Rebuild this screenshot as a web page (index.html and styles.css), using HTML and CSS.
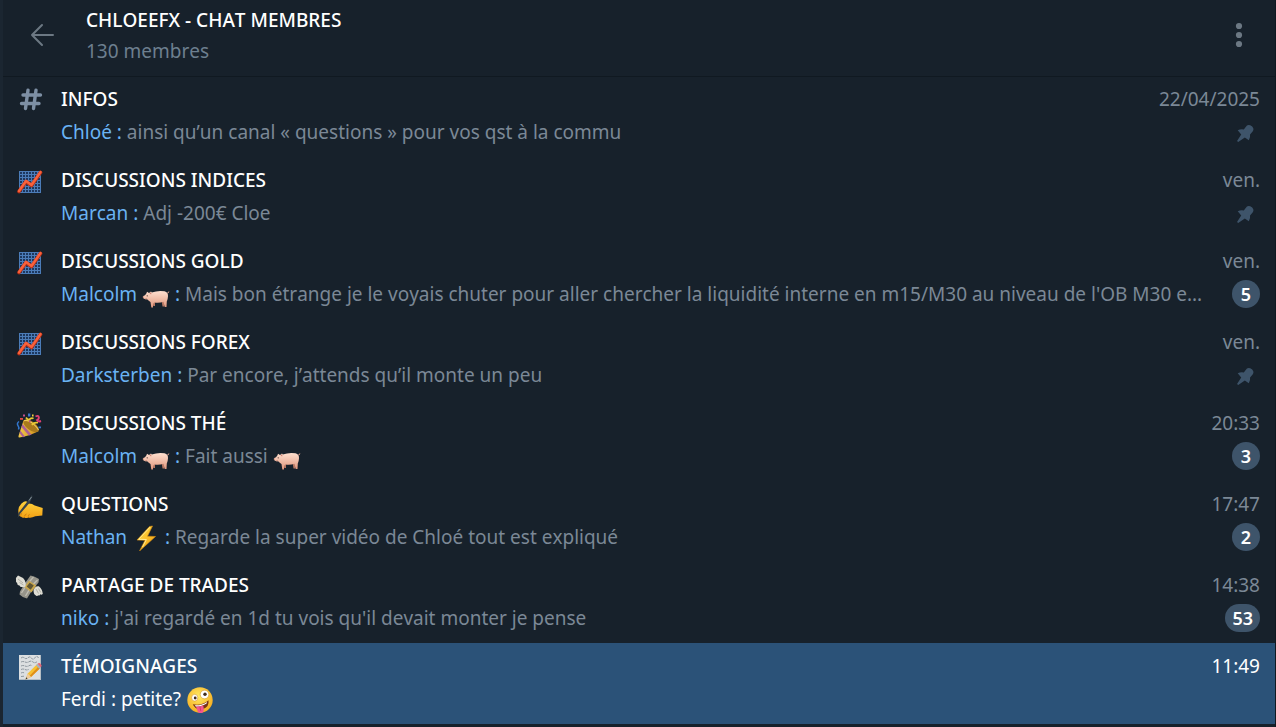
FILE: index.html
```html
<!DOCTYPE html>
<html lang="fr">
<head>
<meta charset="utf-8">
<title>CHLOEEFX - CHAT MEMBRES</title>
<meta name="viewport" content="width=device-width, initial-scale=1">
<link rel="stylesheet" href="styles.css">
</head>
<body>
<svg class="sprite" width="0" height="0" aria-hidden="true">
  <defs>
    <linearGradient id="g-pig" x1="0" y1="0" x2="0" y2="1"><stop offset="0" stop-color="#ffe0d0"/><stop offset="1" stop-color="#e0967c"/></linearGradient>
    <linearGradient id="g-bolt" x1="0" y1="0" x2="1" y2="1"><stop offset="0" stop-color="#ffe24a"/><stop offset="1" stop-color="#f59b0b"/></linearGradient>
    <linearGradient id="g-hand" x1="0" y1="0" x2="0" y2="1"><stop offset="0" stop-color="#ffd23b"/><stop offset="1" stop-color="#f2a015"/></linearGradient>
    <linearGradient id="g-cone" x1="0" y1="0" x2="1" y2="0"><stop offset="0" stop-color="#f3c94a"/><stop offset="1" stop-color="#c98a1c"/></linearGradient>
    <radialGradient id="g-face" cx=".45" cy=".35" r=".7"><stop offset="0" stop-color="#ffea62"/><stop offset="1" stop-color="#f5a81c"/></radialGradient>
    <pattern id="p-grid" width="3" height="3" patternUnits="userSpaceOnUse" x="4" y="3"><rect width="3" height="3" fill="#4b7cb8"/><rect x="1" y="1" width="2" height="2" fill="#1d385f"/></pattern>
  </defs>
  <symbol id="chart" viewBox="0 0 28 28">
    <rect x="4" y="3" width="22" height="22" fill="url(#p-grid)"/>
    <path d="M4 23.500L11 13.500l5.500 4L25.500 4.500" fill="none" stroke="#b93017" stroke-width="3.600" stroke-linecap="round" stroke-linejoin="round"/>
    <path d="M4 23L11 13l5.500 4L25.500 4" fill="none" stroke="#f8623c" stroke-width="2.400" stroke-linecap="round" stroke-linejoin="round"/>
  </symbol>
  <symbol id="party" viewBox="0 0 28 28">
    <path d="M8.500 9.500L24 20Q14 25 4.500 26.500Q3.200 26.600 3.500 25Z" fill="url(#g-cone)"/>
    <path d="M7.500 13l9 10.800-2.600.8L6.500 16ZM5.300 19.500l4.700 6.200-2.200.5L4.600 22Z" fill="#ac5f96"/>
    <ellipse cx="16" cy="14.800" rx="9" ry="4.300" transform="rotate(36 16 14.800)" fill="#a8791c"/>
    <path d="M9 9.700q4-1.500 9 3t5.500 6.500" fill="none" stroke="#efc958" stroke-width="1.100"/>
    <path d="M11 6.500q2 3 4 1.500t3.500-.3M17 14q1.500-3 6-2.300" fill="none" stroke="#e9c932" stroke-width="1.700"/>
    <path d="M20.500 5.500q3-1.500 3.300.7t-1.800 3q1 2 4 .8" fill="none" stroke="#e23f73" stroke-width="1.900"/>
    <path d="M4 10.500q-2.700 2-.8 4.500 1.200 1.500.2 3.500" fill="none" stroke="#3276cd" stroke-width="1.500"/>
    <path d="M13 2.500h2.300v3H13zM23.500 15.500h2.500v1.700h-2.500z" fill="#3c78cb"/>
    <path d="M8 3.500h2v2H8zM14 9.500h1.700v1.700H14z" fill="#c2508d"/>
    <path d="M5 7h3v1.800H5z" fill="#e34c43"/>
    <path d="M17 3.500h1.600v2H17z" fill="#f4d044"/>
  </symbol>
  <symbol id="writing" viewBox="0 0 28 28">
    <path d="M3.500 21Q2.500 15.500 6.500 11.500q4-3.500 6-1.500l.2 1.700q4-.5 7 1.800l8 2.500-.4 7.500-7 .8q-4 2-7 1.200-2.400 1.200-3.800 0-2.300.8-3.200-.8-2.300-.2-2.800-3.700Z" fill="url(#g-hand)"/>
    <path d="M7.500 17q3.500-1.300 5.500-5.500M9.500 24.300q.5-2 2-2.300M5.700 23.500q0-1.700 1.500-2.300M13.500 24.500q-.3-1.500 1-2.300" fill="none" stroke="#cb7c0b" stroke-width=".9"/>
    <path d="M2.700 26L3.500 21 13.500 8l3.500-5 .4 1.800L14.800 10.500 5.200 21.700Z" fill="#38434b"/>
    <path d="M14 8.500l2.500-3.500" stroke="#7c8b94" stroke-width="1"/>
  </symbol>
  <symbol id="money" viewBox="0 0 28 28">
    <path d="M5 18.500L10.500 9.500 15.500 2.500Q19.500 3 24 6L23.500 9.500 18 16l-6 9.500Q8 25 4.500 21.500Z" fill="#96948a"/>
    <path d="M6.500 20l5.500-8.500 6.500-7.500M10.500 23l6-10L22.500 7" fill="none" stroke="#bfbdb2" stroke-width="1.300"/>
    <path d="M9.300 14l4.700-6.300 7.300 4.800-4.800 7Z" fill="#c9a64c"/>
    <path d="M11.700 13.600l3-3.800 4.100 2.800-3.200 4.200Z" fill="#5d5535"/>
    <path d="M10.500 13.500Q12.500 6 3 2.500.5 4.500 1 7q-.5 2.300 1.200 3-.2 2.300 2.300 2.500.8 2 2.700 1.400 1.200 1 3.300-.4Z" fill="#deddd4"/>
    <path d="M18.500 17q1.700-4.500 5.300-3.700 3.500 2.500 4 7.500-1.200 1.500-2.600.5-.3 1.700-2.100 1-.7 1.300-2.200.2-2.400-1-2.400-5.500Z" fill="#deddd4"/>
    <path d="M3 6l5 4M4.500 9.500l4 2.500M21 16l2.500 4.500M23.500 15.500l2.300 4" fill="none" stroke="#aaa99e" stroke-width=".9"/>
  </symbol>
  <symbol id="memo" viewBox="0 0 28 28">
    <path d="M4 1h22v25H4Z" fill="#dcdfe1"/>
    <path d="M26 1v25H4v-1h21V1Z" fill="#b5bdc3"/>
    <path d="M6 4q2-1.500 3.500 0t3.500-.3 3.500.5 3.500-.5 3.500.3M6 8q2-1 4 0t4-.3 4 .3 4-.3M6 12q2-1 4 0t4-.3 3 .3M6 15.500q2-1 4 0t4-.3M6 19q2-1 3.500 0M6 22.500l3-.3" fill="none" stroke="#858f96" stroke-width=".9" stroke-dasharray="3 .7"/>
    <path d="M10.500 25.500l2.300-6L22 10.300l3.300 3.700L16 23.100Z" fill="#f7c031"/>
    <path d="M14.500 22l9.200-9.800 1.600 1.800L16 23.100Z" fill="#df8d19"/>
    <path d="M10.500 25.500l2.300-6 3.200 3.600Z" fill="#edcba0"/>
    <path d="M10.500 25.500l.8-2.200 1.200 1.300Z" fill="#333"/>
    <path d="M21 11.300l1.500-1.500 3.300 3.700-1.400 1.500Z" fill="#a5b3bd"/>
    <path d="M22.500 9.800q1.700-1.600 3.300.2 1.700 1.700 0 3.500Z" fill="#e76776"/>
  </symbol>
  <symbol id="pig" viewBox="0 0 28 20">
    <path d="M8.500 12l3 5h1.500l0-4ZM19.500 11l1 6.500h1.500L24 11Z" fill="#b97864"/>
    <path d="M.7 8Q.8 6.700 3 6.200L4.500 4.300 5 2.800l2 1.200 2-1.500.8 1Q16 1.200 22.500 2.300q3.800 1 3.500 5-.2 3.500-1.200 5.200L24.500 18h-1.800L21.500 12.800q-4 1.400-9.300.7L11 15v3.500H9.300L8.500 13Q6.500 11.800 5.500 10.500 1 10.200.7 8Z" fill="url(#g-pig)"/>
    <path d="M25.300 4q1.500 0 1.500-1.500" fill="none" stroke="#eaa993" stroke-width="1"/>
    <path d="M7.500 5l1.300-2 .8 2.300Z" fill="#cf8474"/>
    <circle cx="5.200" cy="6.800" r=".6" fill="#3d2924"/>
    <path d="M1.500 7.300v1.800M3 9.900q1.200 0 2-.8" fill="none" stroke="#c88170" stroke-width=".7"/>
  </symbol>
  <symbol id="bolt" viewBox="0 0 28 28">
    <path d="M17.500 2.500L5 16l8 .3L7.500 27 23.500 12.500l-8-.3L20.500 2Z" fill="url(#g-bolt)" stroke="#d78d13" stroke-width=".6"/>
    <path d="M18 3.200L6.700 15.300l7.700.2L10.500 23" fill="none" stroke="#fff1a2" stroke-width=".9"/>
  </symbol>
  <symbol id="zany" viewBox="0 0 28 28">
    <circle cx="14" cy="14" r="12.700" fill="url(#g-face)"/>
    <ellipse cx="8.700" cy="11.700" rx="3.100" ry="3.400" fill="#fff" stroke="#d3952b" stroke-width=".6"/>
    <circle cx="9.200" cy="12" r="1.400" fill="#432d1c"/>
    <circle cx="18.500" cy="8.500" r="4.300" fill="#fff" stroke="#d3952b" stroke-width=".6"/>
    <circle cx="19" cy="8.200" r="1.700" fill="#432d1c"/>
    <path d="M6.800 18.200Q16 20 22.500 14.200q.9 7-5.600 8.700-7.400 1.700-10.100-4.700Z" fill="#783317"/>
    <path d="M8.700 19.200q7 .4 12.400-3.300l-.5 1.700Q16 20.800 10 20.700Z" fill="#fff"/>
    <path d="M10 20.500q4.500.4 7.200-1.300l.7 4.600q-.4 3.200-3 3.500-2.700.1-3.500-2.600Z" fill="#f4568e"/>
    <path d="M14 21l.7 3.800" stroke="#c92e69" stroke-width=".8"/>
  </symbol>
  <symbol id="hash" viewBox="0 0 28 28">
    <path d="M13 3.300L10.500 21.500M21 3.300L18.500 21.500M8 8h17.500M6.500 16.500h17.500" fill="none" stroke="currentColor" stroke-width="3.400" stroke-linecap="round"/>
  </symbol>
  <symbol id="pin" viewBox="0 0 20 20">
    <path d="M11.500 1.500q1.500-.8 3.500-.2 2.500 1 3.300 3.500.4 1.800-.8 3.200L14.800 11q.5 3-1.300 6L9.300 14.200 2.300 19l-1.200-1.100L5.500 11 1.800 6.500q3.200-1.500 6.400-.8Z" fill="currentColor"/>
  </symbol>
</svg>
<div class="app">
  <header class="header">
    <button class="icon-button" type="button" aria-label="Retour">
      <svg width="28" height="28" viewBox="0 0 28 28"><path d="M25 14H4M14 4L4 14l10 10" fill="none" stroke="currentColor" stroke-width="2" stroke-linecap="round" stroke-linejoin="round"/></svg>
    </button>
    <div class="heading">
      <h1 class="title">CHLOEEFX - CHAT MEMBRES</h1>
      <p class="subtitle">130 membres</p>
    </div>
    <button class="icon-button" type="button" aria-label="Menu">
      <svg width="28" height="28" viewBox="0 0 28 28"><g fill="currentColor"><circle cx="14" cy="5" r="3.100"/><circle cx="14" cy="14" r="3.100"/><circle cx="14" cy="23" r="3.100"/></g></svg>
    </button>
  </header>
  <main class="topics">
    <a class="topic" href="#infos">
      <svg class="topic-icon"><use href="#hash"/></svg>
      <span class="name">INFOS</span><time class="time">22/04/2025</time>
      <span class="message"><span class="sender">Chloé :</span> ainsi qu’un canal « questions » pour vos qst à la commu</span>
      <svg class="pin"><use href="#pin"/></svg>
    </a>
    <a class="topic" href="#indices">
      <svg class="topic-icon"><use href="#chart"/></svg>
      <span class="name">DISCUSSIONS INDICES</span><time class="time">ven.</time>
      <span class="message"><span class="sender">Marcan :</span> Adj -200€ Cloe</span>
      <svg class="pin"><use href="#pin"/></svg>
    </a>
    <a class="topic" href="#gold">
      <svg class="topic-icon"><use href="#chart"/></svg>
      <span class="name">DISCUSSIONS GOLD</span><time class="time">ven.</time>
      <span class="message"><span class="sender">Malcolm <svg class="emoji emoji-pig"><use href="#pig"/></svg> :</span> Mais bon étrange je le voyais chuter pour aller chercher la liquidité interne en m15/M30 au niveau de l'OB M30 e...</span>
      <span class="badge">5</span>
    </a>
    <a class="topic" href="#forex">
      <svg class="topic-icon"><use href="#chart"/></svg>
      <span class="name">DISCUSSIONS FOREX</span><time class="time">ven.</time>
      <span class="message"><span class="sender">Darksterben :</span> Par encore, j’attends qu’il monte un peu</span>
      <svg class="pin"><use href="#pin"/></svg>
    </a>
    <a class="topic" href="#the">
      <svg class="topic-icon"><use href="#party"/></svg>
      <span class="name">DISCUSSIONS THÉ</span><time class="time">20:33</time>
      <span class="message"><span class="sender">Malcolm <svg class="emoji emoji-pig"><use href="#pig"/></svg> :</span> Fait aussi <svg class="emoji emoji-pig"><use href="#pig"/></svg></span>
      <span class="badge">3</span>
    </a>
    <a class="topic" href="#questions">
      <svg class="topic-icon"><use href="#writing"/></svg>
      <span class="name">QUESTIONS</span><time class="time">17:47</time>
      <span class="message"><span class="sender">Nathan <svg class="emoji"><use href="#bolt"/></svg> :</span> Regarde la super vidéo de Chloé tout est expliqué</span>
      <span class="badge">2</span>
    </a>
    <a class="topic" href="#trades">
      <svg class="topic-icon"><use href="#money"/></svg>
      <span class="name">PARTAGE DE TRADES</span><time class="time">14:38</time>
      <span class="message"><span class="sender">niko :</span> j'ai regardé en 1d tu vois qu'il devait monter je pense</span>
      <span class="badge">53</span>
    </a>
    <a class="topic selected" href="#temoignages" aria-current="page">
      <svg class="topic-icon"><use href="#memo"/></svg>
      <span class="name">TÉMOIGNAGES</span><time class="time">11:49</time>
      <span class="message"><span class="sender">Ferdi :</span> petite? <svg class="emoji"><use href="#zany"/></svg></span>
    </a>
  </main>
</div>
</body>
</html>
```
FILE: styles.css
```css
* { box-sizing: border-box; }

body {
  margin: 0;
  background: #17212b;
  color: #7b8896;
  font: 19px/28px "Noto Sans", "Open Sans", sans-serif;
  font-kerning: none;
}

.sprite { position: absolute; }

.app {
  min-height: 100vh;
  border-left: 3px solid #1b2631;
  border-right: 1px solid #101921;
}

.header {
  display: flex;
  align-items: center;
  gap: 30px;
  height: 77px;
  padding: 0 22px 6px 25px;
  border-bottom: 1px solid #101921;
}

.heading { flex: 1; min-width: 0; }

.title {
  margin: 0 0 3px;
  color: #fff;
  font-size: 19px;
  font-weight: 500;
}

.subtitle { margin: 0; color: #6d7f8f; }

.icon-button {
  display: flex;
  padding: 0;
  border: 0;
  background: none;
  color: #6c7883;
  cursor: pointer;
}

.topics { display: flex; flex-direction: column; margin-top: -1px; }

.topic {
  display: grid;
  grid-template-columns: 28px minmax(0, 1fr) auto;
  column-gap: 15px;
  row-gap: 5px;
  align-items: center;
  padding: 9px 15px 11px;
  color: inherit;
  text-decoration: none;
}

.topic-icon {
  width: 28px;
  height: 28px;
  margin: 2px 0 -2px -3px;
  color: #7d8fa4;
}

.name {
  color: #fff;
  font-weight: 500;
}

.time { justify-self: end; }

.message {
  grid-column: 2;
  overflow: hidden;
  height: 28px;
  white-space: nowrap;
  text-overflow: ellipsis;
}

.sender { color: #6ab3f3; }

.emoji {
  width: 28px;
  height: 28px;
  vertical-align: -8px;
}

.emoji-pig { height: 20px; }

.pin {
  justify-self: end;
  width: 19px;
  height: 19px;
  margin: 3px 5px 0 0;
  color: #3e546a;
}

.badge {
  justify-self: end;
  min-width: 28px;
  padding: 0 7px;
  border-radius: 14px;
  background: #3e546a;
  color: #fff;
  font-size: 18px;
  font-weight: 600;
  text-align: center;
}

.selected { background: #2b5278; }

.selected .time,
.selected .message,
.selected .sender { color: #fff; }
```
